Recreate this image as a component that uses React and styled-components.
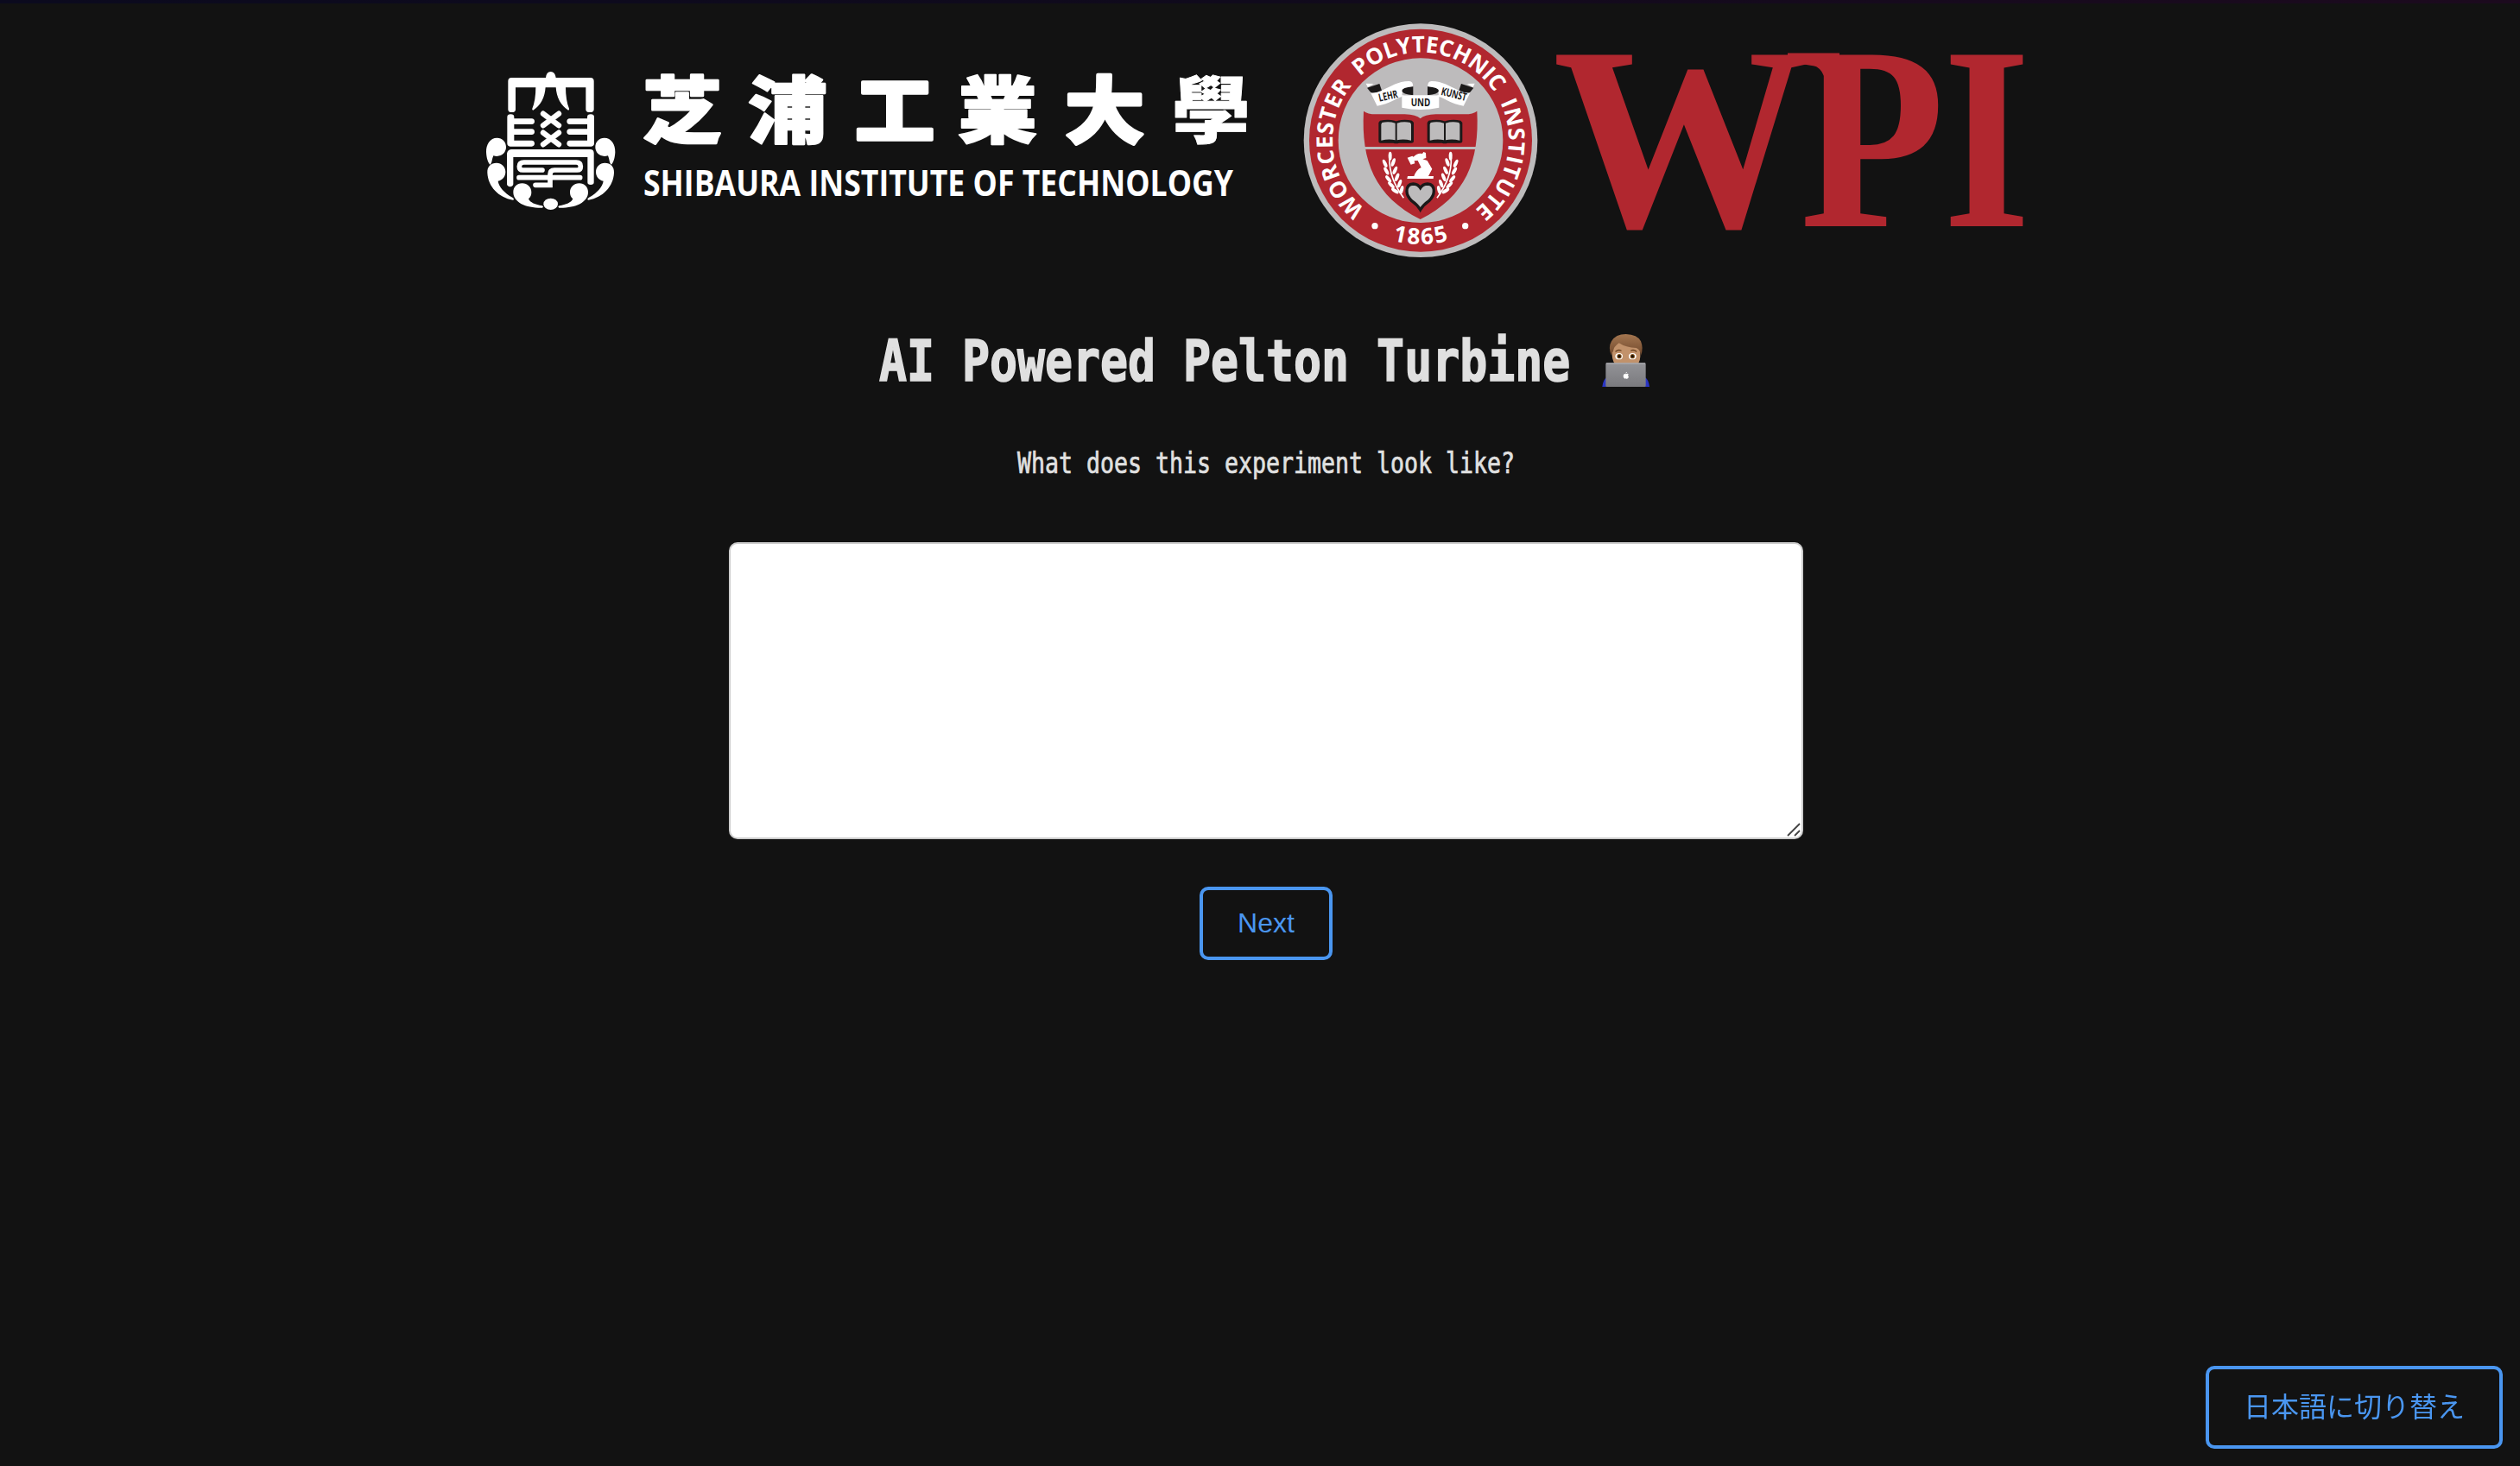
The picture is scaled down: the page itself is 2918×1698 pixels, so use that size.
import React from "react";
import styled, { createGlobalStyle } from "styled-components";

const GlobalStyle = createGlobalStyle`
  html, body { margin: 0; background: #121212; }
  * { box-sizing: border-box; }
`;

const accent = "#4a96f0";
const crimson = "#b1272f";
const silver = "#bdbbbc";

const Page = styled.div`
  min-height: 1698px;
  display: flex;
  flex-direction: column;
  background: #121212;
  color: #e0e0e0;
`;

const TopEdge = styled.div`
  height: 4px;
  background: linear-gradient(90deg, #0b0a1e, #100a1c 50%, #1c0a1e);
`;

const Brands = styled.header`
  display: flex;
  justify-content: center;
  align-items: center;
  height: 306px;
  padding: 16px 18px 0 0;
`;

const Logo = styled.svg`
  display: block;
  flex: none;
  overflow: visible;
  width: ${(p) => p.$w}px;
  height: ${(p) => p.$h}px;
  margin-right: ${(p) => p.$gap || 0}px;
`;

const Main = styled.main`
  display: flex;
  flex-direction: column;
  align-items: center;
  padding: 69px 0 0 14px;
`;

const Title = styled.h1`
  display: flex;
  align-items: flex-start;
  margin: 0;
  height: 80px;
  width: 900px;
  white-space: pre;
`;

const TitleText = styled.span`
  flex: none;
  width: 824px;
  font: 700 66px/80px "DejaVu Sans Mono", monospace;
  -webkit-text-stroke: 1.6px currentColor;
  transform: translateX(2px) scaleX(0.8055);
  transform-origin: 0 50%;
`;

const EmojiSlot = styled.span`
  flex: none;
  margin-top: -9px;
`;

const Question = styled.p`
  margin: 56px 0 0;
  height: 44px;
  width: 576px;
  white-space: pre;
  font: 400 33px/44px "DejaVu Sans Mono", monospace;
  -webkit-text-stroke: 0.7px currentColor;
  transform: scaleX(0.8055);
  transform-origin: 0 50%;
`;

const AnswerWrap = styled.div`
  position: relative;
  margin: 69px 0 55px;
`;

const Answer = styled.textarea`
  display: block;
  width: 1244px;
  height: 344px;
  padding: 20px;
  border: 2px solid #ccc;
  border-radius: 10px;
  background: #fff;
  color: #121212;
  font: 32px "Liberation Sans", Arial, sans-serif;
  resize: none;
  outline: none;
`;

const Grip = styled.svg`
  position: absolute;
  right: 3px;
  bottom: 3px;
  width: 16px;
  height: 16px;
`;

const OutlineButton = styled.button`
  height: ${(p) => p.$h}px;
  padding: 0 40px ${(p) => p.$lift || 0}px;
  border: 4px solid ${accent};
  border-radius: 10px;
  background: transparent;
  color: ${accent};
  font: 400 32px/36px "Liberation Sans", "Noto Sans CJK JP", sans-serif;
`;

const LanguageBar = styled.div`
  position: fixed;
  right: 20px;
  bottom: 20px;
`;

const Tomoe = () => (
  <>
    <path d="M107 299C82 299 68 322 69 349C70 370 75 384 82 392C90 388 88 374 94 361C120 368 138 352 138 331C138 312 124 299 107 299Z" />
    <path d="M105 386C85 386 72 399 73 420C75 468 112 507 162 515Q169 512 160 506C131 490 113 468 110 449C126 446 136 433 136 417C136 399 122 386 105 386Z" />
    <path d="M194 457C175 457 163 471 163 488C164 524 208 543 264 542Q270 538 263 535C240 531 221 524 216 511C223 505 226 498 226 488C226 470 212 457 194 457Z" />
  </>
);

const Wing = () => (
  <>
    <path d="M241 122H275Q272 176 232 203Q227 202 229 197Q241 168 241 122Z" />
    <path d="M142 227Q142 217 154 217Q166 217 166 227V232H227Q237 233 237 242Q237 251 227 252H166V268H227Q237 269 237 278Q237 287 227 288H166V308H227Q237 309 237 319Q237 328 227 329H152Q142 328 142 318Z" />
  </>
);

const ShibauraEmblem = () => (
  <Logo $w={200} $h={210} viewBox="0 0 600 630" fill="#fff">
    <path d="M145 102Q145 90 157 90H276Q278 69 293 69Q308 69 311 90H431Q443 90 443 102V200Q443 210 429 210Q415 210 415 200V124H171V200Q171 210 158 210Q145 210 145 200Z" />
    <Wing />
    <g transform="translate(586 0) scale(-1 1)"><Wing /></g>
    <path d="M267 215L321 256M321 215L267 256M267 281L321 322M321 281L267 322" stroke="#fff" strokeWidth="19" strokeLinecap="round" />
    <path d="M141 354Q143 339 158 339H430Q443 339 443 352V454Q443 462 432 462Q421 462 421 454V366H163V460Q162 468 152 469Q142 468 141 460Z" />
    <path d="M264 411H196Q184 411 184 398Q184 384 200 384H382Q397 384 397 398Q397 411 385 411H306Q291 411 291 425V463H240M183 437H395" fill="none" stroke="#fff" strokeWidth="17" strokeLinecap="round" />
    <Tomoe />
    <g transform="translate(586 0) scale(-1 1)"><Tomoe /></g>
    <ellipse cx="293" cy="529" rx="25" ry="20" />
  </Logo>
);

const kanji = [
  ["芝", 745, 3], ["浦", 867, 2.5], ["工", 991, 4], ["業", 1110, 2], ["大", 1234, 4], ["學", 1357, 1],
];

const ShibauraName = () => (
  <Logo $w={720} $h={210} $gap={40} viewBox="740 60 720 210" fill="#fff">
    <g fontFamily='"Noto Sans CJK JP", sans-serif' fontWeight="900" fontSize="94" stroke="#fff" strokeLinejoin="round">
      {kanji.map(([c, x, weight]) => (
        <text key={c} strokeWidth={weight} transform={`translate(${x - 1} 159) scale(.98 .9)`}>{c}</text>
      ))}
    </g>
    <text x="745" y="226.5" fontFamily='"Open Sans", sans-serif' fontWeight="700" fontSize="42" textLength="683" lengthAdjust="spacingAndGlyphs">
      SHIBAURA INSTITUTE OF TECHNOLOGY
    </text>
  </Logo>
);

const point = (r, deg) => {
  const a = (deg * Math.PI) / 180;
  return `${(435 + r * Math.sin(a)).toFixed(2)} ${(428 - r * Math.cos(a)).toFixed(2)}`;
};

const ringWords = [
  ["WORCESTER", -141, -51.5],
  ["POLYTECHNIC", -43.5, 57],
  ["INSTITUTE", 64.5, 142],
];

const RingWord = ({ word, from, to }) => {
  const r = 306;
  const len = ((to - from) * Math.PI * r) / 180;
  return (
    <>
      <path id={`ring-${word}`} fill="none" d={`M${point(r, from)}A${r} ${r} 0 0 1 ${point(r, to + 15)}`} />
      <text textLength={len}>
        <textPath href={`#ring-${word}`} textLength={len}>{word}</textPath>
      </text>
    </>
  );
};

const Ribbon = () => (
  <>
    <path fill="#fff" d="M245 230L272 231L250 244L262 262Q285 262 300 254C335 240 355 222 395 222Q410 223 408 241L372 252L370 276C345 283 330 300 284 308Z" />
    <path fill="#1b1919" d="M249 245L292 231L300 254Q280 264 262 262Z" />
    <path fill="#1b1919" d="M409 241Q370 244 370 256Q372 268 409 271Z" />
  </>
);

const Book = () => (
  <>
    <path fill="#1b1919" d="M294 359Q322 354 344 359Q350 363 356 359Q380 354 405 359L411 366V432Q410 438 400 437H360Q350 441 340 437H298Q289 438 289 431V366Z" />
    <path fill={silver} d="M301 366Q325 361 347 368V427Q325 422 298 428V372ZM353 368Q375 361 399 366L402 372V428Q375 422 353 427Z" />
  </>
);

const leaves = [
  [329, 482, 0], [311, 508, -25], [340, 504, 20], [316, 534, -30], [346, 532, 25],
  [323, 562, -38], [353, 556, 22], [333, 583, -45], [362, 578, 20], [346, 603, -55], [369, 600, 15],
];

const Laurel = () => (
  <>
    <path d="M327 490Q325 560 376 628" fill="none" stroke="#fff" strokeWidth="5" />
    {leaves.map(([x, y, a]) => (
      <ellipse key={`${x}-${y}`} cx={x} cy={y} rx="6" ry="15" fill="#fff" transform={`rotate(${a} ${x} ${y})`} />
    ))}
  </>
);

const WpiSeal = () => (
  <Logo $w={290} $h={290} viewBox="0 0 870 870">
    <circle cx="435" cy="428" r="406" fill={silver} />
    <circle cx="435" cy="428" r="387" fill={crimson} />
    <circle cx="435" cy="428" r="286" fill={silver} />
    <g fill="#fff" fontFamily='"Open Sans", sans-serif' fontWeight="700" fontSize="78">
      {ringWords.map(([w, a, b]) => <RingWord key={w} word={w} from={a} to={b} />)}
      <path id="ring-year" fill="none" d={`M${point(361, 220)}A361 361 0 0 0 ${point(361, 140)}`} />
      <text textAnchor="middle" letterSpacing="6">
        <textPath href="#ring-year" startOffset="50.5%">1865</textPath>
      </text>
      <circle cx="276" cy="725" r="11" />
      <circle cx="590" cy="725" r="11" />
    </g>
    <Ribbon />
    <g transform="translate(868 0) scale(-1 1)"><Ribbon /></g>
    <path fill="#fff" d="M370 270Q380 273 410 271H458Q488 273 499 270V314Q435 328 370 314Z" />
    <g fill="#1b1919" fontFamily='"Open Sans", sans-serif' fontWeight="700" fontSize="38">
      <text transform="translate(292 293) rotate(-12)" textLength="67" lengthAdjust="spacingAndGlyphs">LEHR</text>
      <text x="401" y="310" textLength="68" lengthAdjust="spacingAndGlyphs">UND</text>
      <text transform="translate(504 269) rotate(14)" textLength="90" lengthAdjust="spacingAndGlyphs">KUNST</text>
    </g>
    <path fill={crimson} d="M237 326Q250 337 280 337H380Q420 338 434 352Q448 338 488 337H588Q618 337 631 326C640 500 592 622 434 702C276 622 228 500 237 326Z" />
    <path d="M240 454.500H628" stroke={silver} strokeWidth="9" />
    <Book />
    <g transform="translate(169 0)"><Book /></g>
    <Laurel />
    <g transform="translate(868 0) scale(-1 1)"><Laurel /></g>
    <path fill="#fff" d="M389 488L406 482L410 485Q425 470 441 474L445 468L453 471L454 489L442 493L458 498L475 527L462 552H480L479 561H388L390 552H412Q420 530 437 522L425 498L413 499L415 508L401 512Z" />
    <path fill={silver} stroke="#1b1919" strokeWidth="10" d="M434 669Q424 652 404 638Q387 622 387 604Q387 580 409 579Q426 580 434 593Q442 580 459 579Q481 580 481 604Q481 622 464 638Q444 652 434 669Z" />
  </Logo>
);

const WpiWordmark = () => (
  <Logo $w={570} $h={250} viewBox="1790 40 570 250" fill={crimson}>
    <g fontFamily='"Liberation Serif", serif' fontWeight="700" fontSize="303">
      <text x="1798" y="262" textLength="298" lengthAdjust="spacingAndGlyphs">W</text>
      <text x="2084" y="262" textLength="168" lengthAdjust="spacingAndGlyphs">P</text>
      <text x="2250" y="262" textLength="101" lengthAdjust="spacingAndGlyphs">I</text>
    </g>
    <path d="M2070 61.500H2130V98H2114Q2112 74 2090 74H2070Z" />
  </Logo>
);

const CoderEmoji = () => (
  <Logo $w={90} $h={90} viewBox="0 0 270 270">
    <defs>
      <linearGradient id="hair" x1="0" y1="0" x2="0" y2="1">
        <stop offset="0" stopColor="#a47650" />
        <stop offset="1" stopColor="#70482c" />
      </linearGradient>
      <linearGradient id="lid" x1="0" y1="0" x2="0" y2="1">
        <stop offset="0" stopColor="#939397" />
        <stop offset="1" stopColor="#7a7a7e" />
      </linearGradient>
    </defs>
    <path fill="#2a35c4" d="M46 234Q48 210 62 200H194Q208 210 210 234Z" />
    <path fill="#c2926b" d="M80 110Q80 78 128 76Q178 78 178 118Q182 170 128 172Q76 168 80 110Z" />
    <path fill="url(#hair)" d="M77 124Q66 96 78 76Q92 51 128 51Q168 52 180 76Q190 100 180 126Q178 104 164 99Q128 98 104 82Q86 94 84 110Q80 116 77 124Z" />
    <path d="M93 111Q101 104 111 108M146 108Q156 104 164 111" stroke="#68401f" strokeWidth="4" fill="none" strokeLinecap="round" />
    <ellipse cx="104" cy="128" rx="13" ry="11" fill="#fff" />
    <ellipse cx="151" cy="128" rx="13" ry="11" fill="#fff" />
    <circle cx="105" cy="128" r="8" fill="#84521c" />
    <circle cx="151" cy="128" r="8" fill="#84521c" />
    <circle cx="105" cy="128" r="5" fill="#1c1208" />
    <circle cx="151" cy="128" r="5" fill="#1c1208" />
    <rect x="58" y="151" width="139" height="83" rx="4" fill="url(#lid)" />
    <path d="M60 153H195" stroke="#b4b4b8" strokeWidth="3" />
    <path fill="#fff" d="M128 190Q134 186 137 190Q133 195 138 200Q134 208 130 206Q127 204 124 206Q118 204 119 195Q121 187 128 190ZM127 188Q127 184 132 182Q132 187 127 188Z" />
  </Logo>
);

export default function App() {
  return (
    <Page>
      <GlobalStyle />
      <TopEdge />
      <Brands>
        <ShibauraEmblem />
        <ShibauraName />
        <WpiSeal />
        <WpiWordmark />
      </Brands>
      <Main>
        <Title>
          <TitleText>AI Powered Pelton Turbine </TitleText>
          <EmojiSlot><CoderEmoji /></EmojiSlot>
        </Title>
        <Question>What does this experiment look like?</Question>
        <AnswerWrap>
          <Answer />
          <Grip viewBox="0 0 16 16">
            <path d="M1 15L15 1M9 15L15 9" stroke="#444" strokeWidth="1.800" />
          </Grip>
        </AnswerWrap>
        <OutlineButton $h={85} $lift={2}>Next</OutlineButton>
      </Main>
      <LanguageBar>
        <OutlineButton $h={96}>日本語に切り替え</OutlineButton>
      </LanguageBar>
    </Page>
  );
}
